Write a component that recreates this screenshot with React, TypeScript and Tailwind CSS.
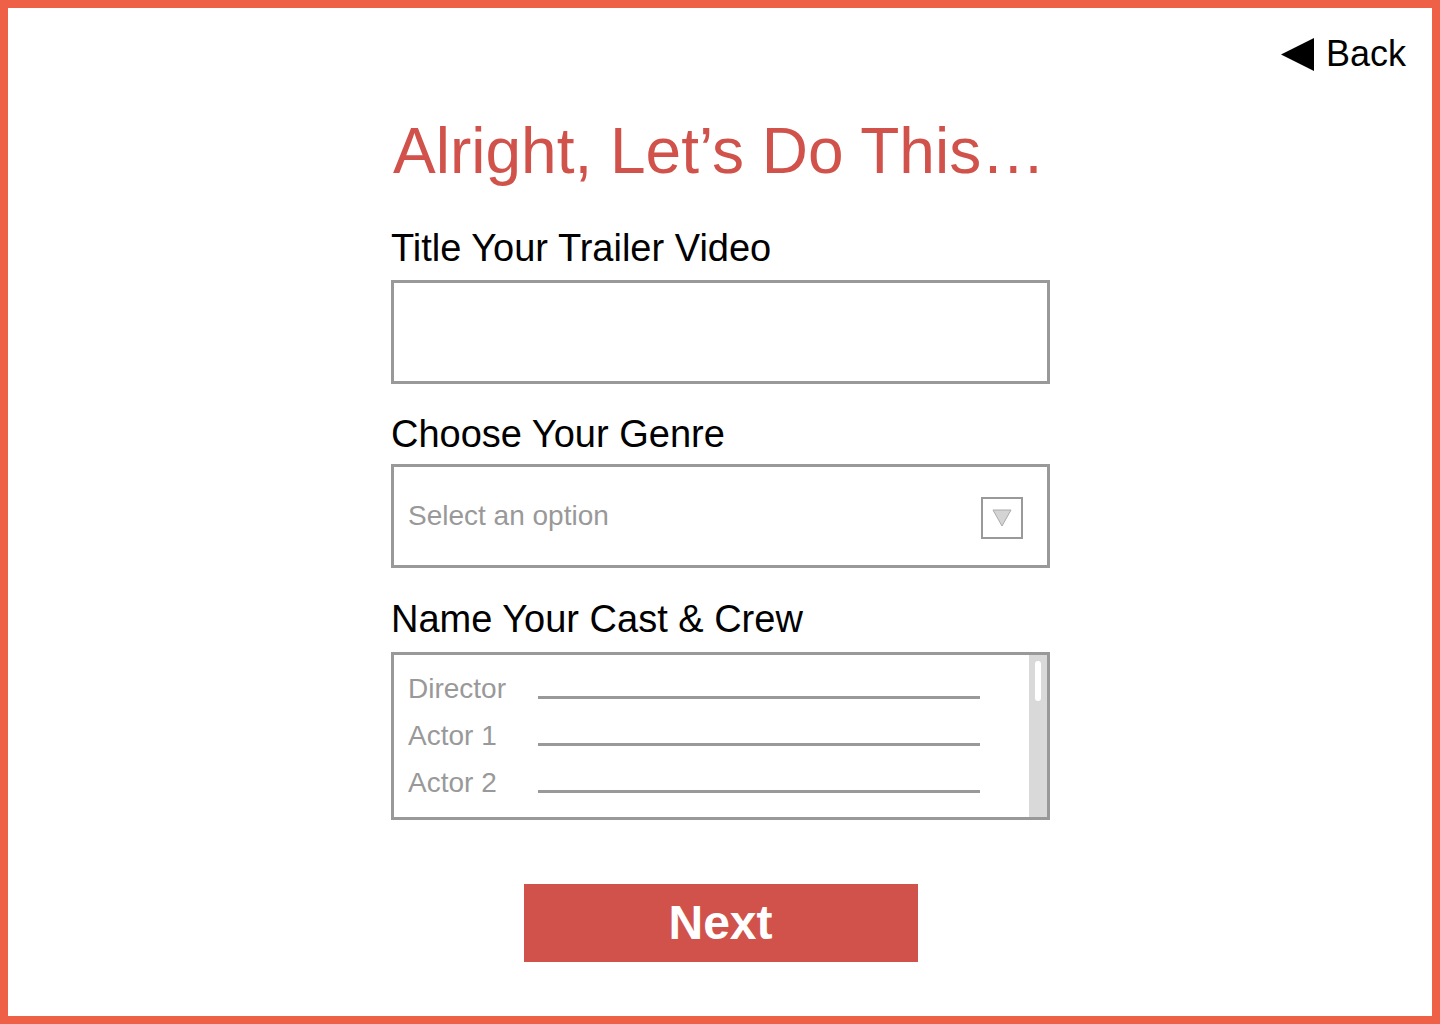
const font = { fontFamily: '"Liberation Sans", Arial, sans-serif' };

function Label({ children }: { children: React.ReactNode }) {
  return <div className="text-[38px] leading-none text-black">{children}</div>;
}

const castRows = ["Director", "Actor 1", "Actor 2"];

export default function App() {
  return (
    <div
      className="w-[1440px] h-[1024px] border-[8px] border-[#ef6146] bg-white flex flex-col"
      style={font}
    >
      <div className="flex justify-end pt-[28px] pr-[26px]">
        <button className="flex items-center gap-[12px] text-[36px] leading-none text-black">
          <svg width="33" height="33" viewBox="0 0 33 33">
            <polygon points="0,16.5 33,0 33,33" fill="#000" />
          </svg>
          Back
        </button>
      </div>

      <div className="w-[659px] ml-[383px] flex flex-col">
        <h1 className="text-[64px] leading-none text-[#d0524b] pl-[2px] mt-[47px]">
          Alright, Let’s Do This…
        </h1>

        <div className="mt-[46px]">
          <Label>Title Your Trailer Video</Label>
        </div>
        <div className="mt-[13px] h-[104px] border-[3px] border-[#999999]" />

        <div className="mt-[31px]">
          <Label>Choose Your Genre</Label>
        </div>
        <div className="mt-[11px] h-[104px] border-[3px] border-[#999999] flex items-center justify-between pl-[14px] pr-[24px]">
          <span className="text-[28px] leading-none text-[#999999]">Select an option</span>
          <div className="mt-[4px] w-[42px] h-[42px] border-[2px] border-[#999999] flex items-center justify-center">
            <svg width="20" height="18" viewBox="0 0 20 18">
              <polygon points="1,1 19,1 10,17" fill="#d4d4d4" stroke="#aaaaaa" strokeWidth="1" />
            </svg>
          </div>
        </div>

        <div className="mt-[32px]">
          <Label>Name Your Cast &amp; Crew</Label>
        </div>
        <div className="mt-[14px] h-[168px] border-[3px] border-[#999999] flex">
          <div className="flex-1 flex flex-col pt-[20px] pl-[14px] gap-[19px]">
            {castRows.map((r) => (
              <div key={r} className="flex items-end h-[28px]">
                <span className="w-[130px] text-[28px] leading-none text-[#999999]">{r}</span>
                <div className="w-[442px] h-[3px] bg-[#999999] mb-[4px]" />
              </div>
            ))}
          </div>
          <div className="w-[18px] bg-[#d9d9d9] flex justify-center pt-[6px]">
            <div className="w-[6px] h-[40px] rounded-full bg-white" />
          </div>
        </div>

        <button className="mt-[64px] mx-auto w-[394px] h-[78px] bg-[#d0524b] text-white font-bold text-[48px] leading-none flex items-center justify-center">
          Next
        </button>
      </div>
    </div>
  );
}
